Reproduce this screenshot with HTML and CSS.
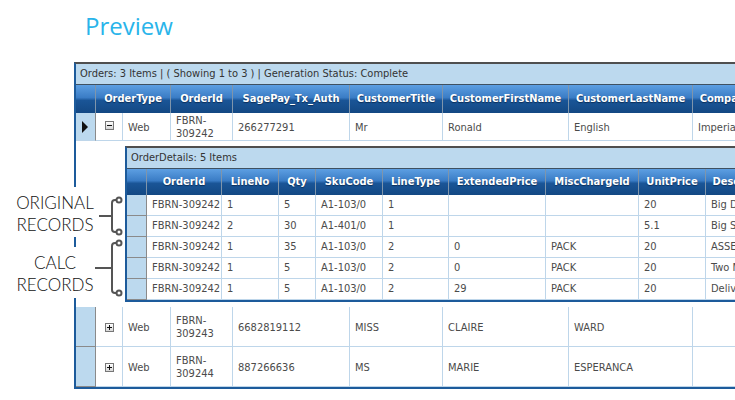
FILE: index.html
```html
<!DOCTYPE html>
<html lang="en">
<head>
    <meta charset="UTF-8">
    <title>Preview</title>
    <link rel="stylesheet" href="styles.css">
</head>
<body>
    <h1 class="page-title">Preview</h1>

    <div class="stage">
        <div class="grid grid-orders">
            <div class="grid-caption">Orders: 3 Items | ( Showing 1 to 3 ) | Generation Status: Complete</div>
            <table class="grid-table orders-table">
                <colgroup>
                    <col class="col-ind">
                    <col class="col-toggle">
                    <col class="col-type">
                    <col class="col-order">
                    <col class="col-auth">
                    <col class="col-title">
                    <col class="col-first">
                    <col class="col-last">
                    <col class="col-company">
                </colgroup>
                <thead>
                    <tr>
                        <th></th>
                        <th colspan="2">OrderType</th>
                        <th>OrderId</th>
                        <th>SagePay_Tx_Auth</th>
                        <th>CustomerTitle</th>
                        <th>CustomerFirstName</th>
                        <th>CustomerLastName</th>
                        <th>CompanyName</th>
                    </tr>
                </thead>
                <tbody>
                    <tr class="row-short">
                        <td class="ind"><span class="current"></span></td>
                        <td class="toggle-cell"><span class="toggle"></span></td>
                        <td>Web</td>
                        <td>FBRN-309242</td>
                        <td>266277291</td>
                        <td>Mr</td>
                        <td>Ronald</td>
                        <td>English</td>
                        <td>Imperial</td>
                    </tr>
                    <tr class="detail-row">
                        <td class="blank"></td>
                        <td class="blank"></td>
                        <td class="detail-cell" colspan="7">
                            <div class="grid grid-details">
                                <div class="grid-caption">OrderDetails: 5 Items</div>
                                <table class="grid-table details-table">
                                    <colgroup>
                                        <col class="col-ind">
                                        <col class="d-order">
                                        <col class="d-line">
                                        <col class="d-qty">
                                        <col class="d-sku">
                                        <col class="d-type">
                                        <col class="d-ext">
                                        <col class="d-misc">
                                        <col class="d-unit">
                                        <col class="d-desc">
                                    </colgroup>
                                    <thead>
                                        <tr>
                                            <th></th>
                                            <th>OrderId</th>
                                            <th>LineNo</th>
                                            <th>Qty</th>
                                            <th>SkuCode</th>
                                            <th>LineType</th>
                                            <th>ExtendedPrice</th>
                                            <th>MiscChargeId</th>
                                            <th>UnitPrice</th>
                                            <th>Description</th>
                                        </tr>
                                    </thead>
                                    <tbody>
                                        <tr>
                                            <td class="ind"></td>
                                            <td>FBRN-309242</td><td>1</td><td>5</td><td>A1-103/0</td><td>1</td>
                                            <td></td><td></td><td>20</td><td>Big Digger</td>
                                        </tr>
                                        <tr>
                                            <td class="ind"></td>
                                            <td>FBRN-309242</td><td>2</td><td>30</td><td>A1-401/0</td><td>1</td>
                                            <td></td><td></td><td>5.1</td><td>Big Shovel</td>
                                        </tr>
                                        <tr>
                                            <td class="ind"></td>
                                            <td>FBRN-309242</td><td>1</td><td>35</td><td>A1-103/0</td><td>2</td>
                                            <td>0</td><td>PACK</td><td>20</td><td>ASSEMBLY</td>
                                        </tr>
                                        <tr>
                                            <td class="ind"></td>
                                            <td>FBRN-309242</td><td>1</td><td>5</td><td>A1-103/0</td><td>2</td>
                                            <td>0</td><td>PACK</td><td>20</td><td>Two Man Lift</td>
                                        </tr>
                                        <tr>
                                            <td class="ind"></td>
                                            <td>FBRN-309242</td><td>1</td><td>5</td><td>A1-103/0</td><td>2</td>
                                            <td>29</td><td>PACK</td><td>20</td><td>Delivery</td>
                                        </tr>
                                    </tbody>
                                </table>
                            </div>
                        </td>
                    </tr>
                    <tr class="row-tall">
                        <td class="ind"></td>
                        <td class="toggle-cell"><span class="toggle plus"></span></td>
                        <td>Web</td>
                        <td>FBRN-309243</td>
                        <td>6682819112</td>
                        <td>MISS</td>
                        <td>CLAIRE</td>
                        <td>WARD</td>
                        <td></td>
                    </tr>
                    <tr class="row-tall">
                        <td class="ind"></td>
                        <td class="toggle-cell"><span class="toggle plus"></span></td>
                        <td>Web</td>
                        <td>FBRN-309244</td>
                        <td>887266636</td>
                        <td>MS</td>
                        <td>MARIE</td>
                        <td>ESPERANCA</td>
                        <td></td>
                    </tr>
                </tbody>
            </table>
        </div>

        <!-- callouts over the detail rows -->
        <div class="note note-original">ORIGINAL<br>RECORDS</div>
        <div class="note note-calc">CALC<br>RECORDS</div>
        <svg class="brackets" width="35" height="115" viewBox="90 185 35 115">
            <g fill="none" stroke="#555" stroke-width="2">
                <path d="M99 216 H112"/>
                <path d="M116.5 200 H115 Q112 200 112 203 V229 Q112 232 115 232 H116.5"/>
                <circle cx="119" cy="200" r="2.5"/>
                <circle cx="119" cy="232" r="2.5"/>
                <path d="M95 268 H112"/>
                <path d="M116.5 243 H115 Q112 243 112 246 V290 Q112 293 115 293 H116.5"/>
                <circle cx="119" cy="243" r="2.5"/>
                <circle cx="119" cy="293" r="2.5"/>
            </g>
        </svg>
    </div>
</body>
</html>
```

FILE: styles.css
```css
:root {
    --caption-bg: #bcd9ee;
    --cell-line: #bed6ea;
    --grid-blue: #1d5b9b;
    --grid-dark: #4f4f4f;
    --text-color: #4b4b4b;
}

body {
    margin: 0;
    background: #fff;
    font-family: "DejaVu Sans Condensed", "DejaVu Sans", sans-serif;
    overflow: hidden;
}

.page-title {
    margin: 0 0 0 85px;
    padding-top: 11px;
    font: 400 24px/29px "Open Sans", sans-serif;
    color: #29b4ea;
}

.stage {
    position: relative;
    margin-top: 22px;
    padding-left: 74px;
    height: 338px;
    overflow: hidden;
}

/* grid frame */
.grid {
    border-top: 2px solid var(--grid-dark);
    border-left: 2px solid var(--grid-blue);
    border-bottom: 2px solid var(--grid-blue);
    font-size: 11px;
}

.grid-caption {
    height: 20px;
    line-height: 20px;
    padding: 0 4px;
    background: var(--caption-bg);
    color: #333;
    border-bottom: 1px solid #3f5161;
    white-space: nowrap;
}

.grid-table {
    border-collapse: separate;
    border-spacing: 0;
    table-layout: fixed;
}

.orders-table { width: 715px; }
.details-table { width: 657px; }

.col-ind { width: 20px; }
.col-toggle { width: 27px; }
.col-type { width: 48px; }
.col-order { width: 62px; }
.col-auth { width: 117px; }
.col-title { width: 93px; }
.col-first { width: 126px; }
.col-last { width: 124px; }
.col-company { width: 98px; }

.d-order { width: 75px; }
.d-line { width: 57px; }
.d-qty { width: 37px; }
.d-sku { width: 67px; }
.d-type { width: 66px; }
.d-ext { width: 97px; }
.d-misc { width: 93px; }
.d-unit { width: 67px; }
.d-desc { width: 78px; }

th {
    padding: 7px 2px;
    line-height: 14px;
    background: linear-gradient(#5d9fe2, #3a7cc5 45%, #1a5597 55%, #134883);
    color: #fff;
    font-weight: bold;
    text-align: center;
    text-shadow: 0 1px 1px #0c2e58;
    border-right: 1px solid #7f95ab;
    white-space: nowrap;
    overflow: hidden;
}

td {
    padding: 1px 5px 0;
    line-height: 13px;
    color: var(--text-color);
    border-right: 1px solid var(--cell-line);
    border-bottom: 1px solid var(--cell-line);
    vertical-align: middle;
    overflow: hidden;
}

.row-tall td {
    padding-top: 7px;
    padding-bottom: 6px;
}

td.ind {
    padding: 0;
    background: var(--caption-bg);
    border-right-color: #8a8a8a;
    border-bottom-color: #8a8a8a;
}

.row-short td.ind { border-bottom-color: var(--cell-line); }

.current {
    display: block;
    width: 0;
    height: 0;
    margin-left: 6px;
    border-left: 6px solid #111;
    border-top: 6px solid transparent;
    border-bottom: 6px solid transparent;
}

.toggle-cell { padding: 0 0 2px 9px; }

.toggle {
    display: block;
    position: relative;
    width: 7px;
    height: 7px;
    border: 1px solid #777;
    background: linear-gradient(#fff, #d6d6d6);
}

.toggle::before {
    content: "";
    position: absolute;
    left: 1px;
    top: 3px;
    width: 5px;
    height: 1px;
    background: #111;
}

.toggle.plus::after {
    content: "";
    position: absolute;
    left: 3px;
    top: 1px;
    width: 1px;
    height: 5px;
    background: #111;
}

/* expanded detail row */
.detail-row td.blank {
    border: 0;
    padding: 0;
}

td.detail-cell {
    padding: 5px 0 5px 2px;
    border: 0;
    overflow: visible;
}

.details-table th {
    padding: 6px 2px;
}

.details-table td {
    padding: 0 5px;
    line-height: 20px;
    white-space: nowrap;
}

.details-table td.ind { padding: 0; }

/* callouts */
.note {
    position: absolute;
    left: 10px;
    width: 90px;
    padding-top: 5px;
    background: #fff;
    color: #111;
    font: 300 17px/22px Lato, "DejaVu Sans", sans-serif;
    text-align: center;
}

.note-original {
    top: 125px;
    height: 45px;
}

.note-calc {
    top: 185px;
    height: 46px;
}

.brackets {
    position: absolute;
    left: 90px;
    top: 123px;
}
```
